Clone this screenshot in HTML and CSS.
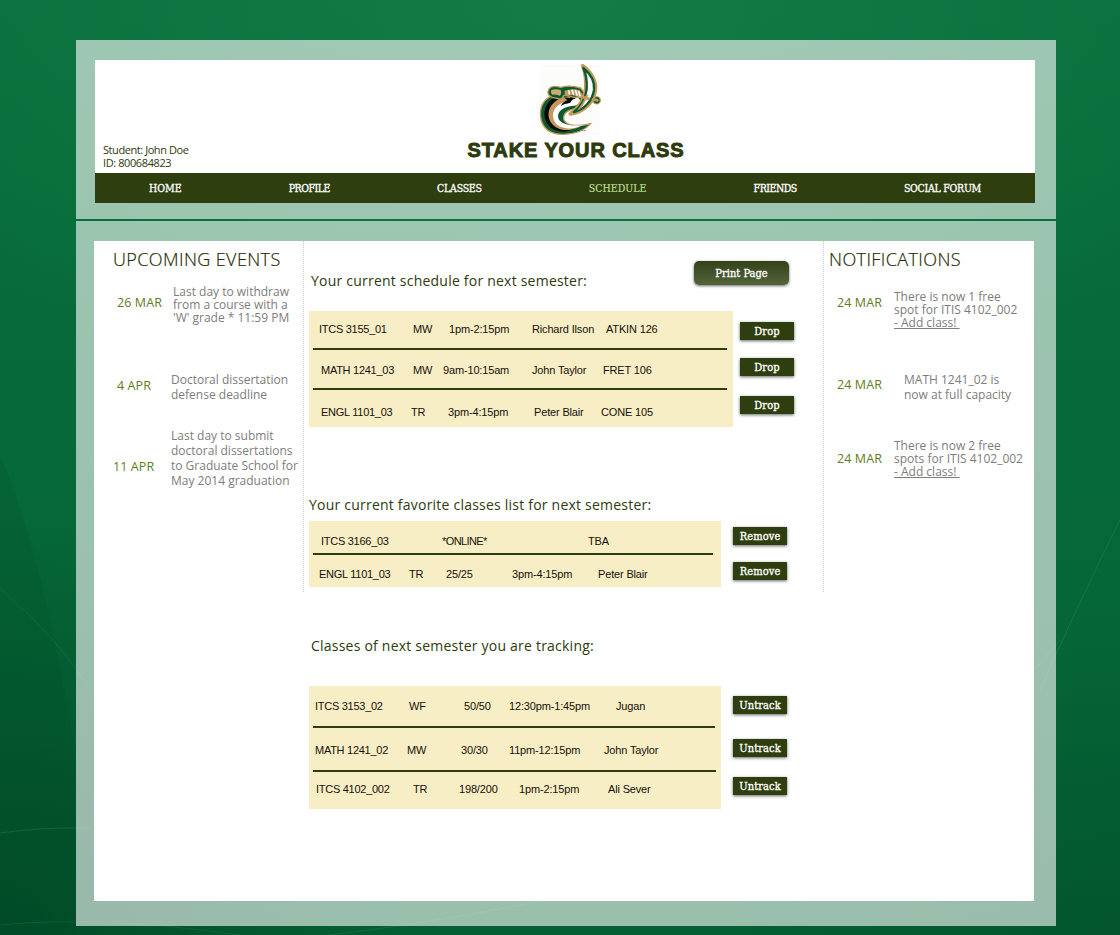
FILE: index.html
```html
<!DOCTYPE html>
<html lang="en">
<head>
<meta charset="utf-8">
<title>Stake Your Class</title>
<link rel="stylesheet" href="styles.css">
</head>
<body>
<svg class="backdrop" viewBox="0 0 1120 935" fill="none" stroke="#2f9a62">
  <path d="M0 833Q40 827 90 828" stroke-opacity=".35"/>
  <path d="M0 588Q60 640 90 690" stroke-opacity=".2"/>
  <path d="M1120 520Q1080 600 1040 690" stroke-opacity=".3"/>
  <path d="M330 935Q620 900 800 820T1060 640" stroke-opacity=".25"/>
  <path d="M0 455Q45 560 76 760L76 935H0Z" fill="#003f22" fill-opacity=".12" stroke="none"/>
  <path d="M0 925Q100 915 240 935" stroke-opacity=".2"/>
</svg>
<div class="shell">
  <header class="panel head">
    <div class="banner">
      <p class="student">Student: John Doe<br>ID: 800684823</p>
      <div class="brand">
        <svg class="logo" viewBox="0 0 240 240">
          <path d="M28 15H212V225H28Z" fill="#fcfdfa"/>
          <g stroke-linejoin="round" stroke-linecap="round">
            <path d="M60 110C36 124 29 148 32 172C37 206 62 223 100 223C138 222 168 208 183 190C150 200 112 200 102 180C97 160 112 149 142 146L158 136L158 96L66 96Z" fill="#0c5a32" stroke="#c49a5c" stroke-width="4"/>
            <path d="M72 113C50 126 40 149 44 172C50 201 70 215 104 215L124 211C84 207 62 186 66 158C70 138 84 124 100 116Z" fill="#0a0a08"/>
            <path d="M98 112C66 124 53 148 56 170C61 196 84 212 118 210L150 202C100 206 76 184 79 160C83 140 100 128 122 126L126 108Z" fill="#c49a5c"/>
            <path d="M132 122C92 122 68 142 69 168C71 197 100 211 138 203L160 196C110 200 84 188 84 168C86 148 108 138 144 136L152 122L140 108Z" fill="#fff"/>
            <path d="M102 112L118 114L128 108L140 112L128 122L118 130Q104 130 92 138Q100 124 112 121Z" fill="#0a0a08"/>
            <path d="M124 122Q136 112 141 120Q142 130 132 134Q112 134 100 142Q108 130 124 130Z" fill="#fff"/>
            <path d="M62 82Q72 76 92 82Q122 74 152 84L162 98L162 112L130 112Q112 104 101 107Q96 120 84 116L66 112Q52 106 54 94Q56 86 62 82Z" fill="#0c5a32" stroke="#c49a5c" stroke-width="4"/>
            <path d="M64 90Q76 86 92 90Q96 98 90 107Q76 103 66 104Q60 97 64 90Z" fill="#d1ab73"/>
            <path d="M104 92Q126 84 148 90L160 106L156 116L146 112L130 106L104 104Z" fill="#c49a5c"/>
            <path d="M117 93L118 102M127 91L130 103M137 92L141 105M146 95L150 107" stroke="#fff" stroke-width="5"/>
            <path d="M158 17C184 36 199 64 196 90C192 126 164 156 121 162C148 142 163 118 167 88C169 62 166 38 158 17Z" fill="#fff" stroke="#c49a5c" stroke-width="11"/>
            <path d="M160 24C182 42 195 66 192 90C187 122 164 148 132 156C152 140 166 116 170 88C172 62 168 42 160 24Z" fill="#fff" stroke="#0c5a32" stroke-width="7"/>
            <path d="M176 104L158 138Q150 149 140 152Q160 128 168 104Z" fill="#c49a5c"/>
            <circle cx="200" cy="121" r="11" fill="#0c5a32" stroke="#c49a5c" stroke-width="3"/>
            <path d="M160 112L176 116M189 118L202 121" stroke="#c49a5c" stroke-width="8"/>
          </g>
          <path d="M156 211H161M163 214V210L165 212L167 210V214M158 211V214" stroke="#555" stroke-width="1.3" fill="none"/>
        </svg>
        <h1 class="title">STAKE YOUR CLASS</h1>
      </div>
    </div>
    <nav class="nav">
      <a class="loose">HOME</a><a class="tight">PROFILE</a><a>CLASSES</a><a class="loose active">SCHEDULE</a><a class="tight">FRIENDS</a><a>SOCIAL FORUM</a>
    </nav>
  </header>
  <main class="panel body">
    <div class="content">
      <aside class="side events">
        <h2>UPCOMING EVENTS</h2>
        <div class="item e1"><b>26 MAR</b><p>Last day to withdraw<br>from a course with a<br>'W' grade * 11:59 PM</p></div>
        <div class="item e2"><b>4 APR</b><p>Doctoral dissertation<br>defense deadline</p></div>
        <div class="item e3"><b>11 APR</b><p>Last day to submit<br>doctoral dissertations<br>to Graduate School for<br>May 2014 graduation</p></div>
      </aside>
      <div class="center">
        <div class="topline"><h3 class="h-sched">Your current schedule for next semester:</h3><button class="print">Print Page</button></div>
        <section class="block sched">
          <div class="table">
            <div class="row s1"><span>ITCS 3155_01</span><span>MW</span><span>1pm-2:15pm</span><span>Richard Ilson</span><span>ATKIN 126</span></div>
            <div class="row s2"><span>MATH 1241_03</span><span>MW</span><span>9am-10:15am</span><span>John Taylor</span><span>FRET 106</span></div>
            <div class="row s3"><span>ENGL 1101_03</span><span>TR</span><span>3pm-4:15pm</span><span>Peter Blair</span><span>CONE 105</span></div>
          </div>
          <div class="actions"><button>Drop</button><button>Drop</button><button>Drop</button></div>
        </section>
        <h3 class="h-fav">Your current favorite classes list for next semester:</h3>
        <section class="block fav">
          <div class="table">
            <div class="row f1"><span>ITCS 3166_03</span><span class="online">*ONLINE*</span><span>TBA</span></div>
            <div class="row f2"><span>ENGL 1101_03</span><span>TR</span><span>25/25</span><span>3pm-4:15pm</span><span>Peter Blair</span></div>
          </div>
          <div class="actions"><button>Remove</button><button>Remove</button></div>
        </section>
        <h3 class="h-track">Classes of next semester you are tracking:</h3>
        <section class="block track">
          <div class="table">
            <div class="row t1"><span>ITCS 3153_02</span><span>WF</span><span>50/50</span><span>12:30pm-1:45pm</span><span>Jugan</span></div>
            <div class="row t2"><span>MATH 1241_02</span><span>MW</span><span>30/30</span><span>11pm-12:15pm</span><span>John Taylor</span></div>
            <div class="row t3"><span>ITCS 4102_002</span><span>TR</span><span>198/200</span><span>1pm-2:15pm</span><span>Ali Sever</span></div>
          </div>
          <div class="actions"><button>Untrack</button><button>Untrack</button><button>Untrack</button></div>
        </section>
      </div>
      <aside class="side notes">
        <h2>NOTIFICATIONS</h2>
        <div class="item n1"><b>24 MAR</b><p>There is now 1 free<br>spot for ITIS 4102_002<br><u>- Add class!&nbsp;</u></p></div>
        <div class="item n2"><b>24 MAR</b><p>MATH 1241_02 is<br>now at full capacity</p></div>
        <div class="item n3"><b>24 MAR</b><p>There is now 2 free<br>spots for ITIS 4102_002<br><u>- Add class!&nbsp;</u></p></div>
      </aside>
    </div>
  </main>
</div>
</body>
</html>
```
FILE: styles.css
```css
* { box-sizing: border-box; }
body {
  margin: 0;
  height: 935px;
  overflow: hidden;
  position: relative;
  font-family: "Open Sans", sans-serif;
  background:
    radial-gradient(ellipse 420px 420px at 0 100%, rgba(0,60,32,.55), transparent),
    radial-gradient(ellipse 420px 300px at 100% 100%, rgba(0,66,36,.35), transparent),
    radial-gradient(ellipse 760px 420px at 50% 0, #127b46, transparent),
    linear-gradient(#08703c, #066a38 40%, #046034);
}
h1, h2, h3, p { margin: 0; font-weight: 400; white-space: nowrap; }
.backdrop { position: absolute; inset: 0; width: 1120px; height: 935px; }
.shell { position: relative; width: 980px; margin-left: 76px; padding-top: 40px; display: flex; flex-direction: column; gap: 2px; }
.panel { background: rgba(255,255,255,.6); }
.head { height: 179px; padding: 20px 21px 0 19px; }
.banner { height: 113px; background: #fff; display: grid; grid-template-columns: 372px 218px; }
.student { padding: 83px 0 0 8px; font-size: 11px; line-height: 13px; letter-spacing: -.4px; color: #2d3b0d; }
.student::first-line { letter-spacing: -.43px; }
.brand { display: flex; flex-direction: column; align-items: center; }
.logo { width: 80px; height: 80px; margin-right: 12px; }
.title { font: bold 20px/20px "Liberation Sans", sans-serif; color: #2d3b0d; -webkit-text-stroke: 1px #2d3b0d; letter-spacing: .9px; }
.nav { height: 30px; background: #2f3e0e; display: flex; justify-content: space-between; align-items: center; padding: 0 54px; font: 10.5px "DejaVu Serif Condensed", "DejaVu Serif", serif; color: #fff; -webkit-text-stroke: .3px; letter-spacing: -.27px; }
.nav .loose { letter-spacing: 0; }
.nav .tight { letter-spacing: -.5px; }
.nav .active { color: #c5e29a; -webkit-text-stroke: .1px; }
.body { height: 705px; padding: 20px 22px 0 18px; }
.content { height: 660px; background: #fff; display: grid; grid-template-columns: 210px 519px 211px; align-items: start; }
.side { height: 351px; }
.events { border-right: 1px dotted #ccc; }
.notes { border-left: 1px dotted #ccc; }
.side h2 { font-size: 18px; line-height: 24px; font-weight: 300; color: #1f2b05; padding: 6px 0 0 19px; letter-spacing: .4px; -webkit-text-stroke: .2px; }
.side.notes h2 { padding-left: 5px; }
.item { display: grid; grid-template-columns: 57px auto; align-items: start; font-size: 12px; line-height: 15px; color: #7d7d7d; }
.item b { font-weight: 400; color: #5e7d1d; font-size: 12.5px; letter-spacing: .1px; }
.item p { letter-spacing: 0; }
.e1 { margin: 14px 0 0 23px; grid-template-columns: 56px auto; line-height: 13px; }
.e1 b { padding-top: 11px; }
.e2 { margin: 48px 0 0 23px; grid-template-columns: 54px auto; }
.e2 b { padding-top: 6px; }
.e3 { margin: 26px 0 0 19px; grid-template-columns: 58px auto; }
.e3 b { padding-top: 31px; }
.n1 { margin: 19px 0 0 13px; line-height: 13px; }
.n1 b { padding-top: 6px; }
.n2 { margin: 43px 0 0 13px; grid-template-columns: 67px auto; }
.n2 b { padding-top: 5px; }
.n3 { margin: 37px 0 0 13px; line-height: 13px; }
.n3 b { padding-top: 13px; }
.center { padding-left: 5px; }
.center h3 { font-size: 14px; line-height: 20px; color: #2d3b0d; letter-spacing: .22px; }
.topline { display: flex; align-items: flex-start; padding: 20px 0 0 2px; height: 70px; }
.topline h3 { width: 383px; padding-top: 10px; }
button { border: 0; padding: 1px 0 0; color: #fff; background: #2f3e0e; font: 11px/17px "DejaVu Serif Condensed", "DejaVu Serif", serif; -webkit-text-stroke: .3px; box-shadow: 0 1px 3px rgba(0,0,0,.6); width: 54px; height: 18px; letter-spacing: .1px; }
.print { width: 95px; height: 24px; border-radius: 5px; line-height: 23px; letter-spacing: 0; background: linear-gradient(#34421a, #53633a); }
.block { display: flex; gap: 12px; }
.sched { height: 116px; gap: 7px; }
.sched .table { width: 424px; padding-right: 6px; }
.fav { height: 66px; }
.track { height: 123px; }
.table { width: 412px; background: #f8eec6; padding: 0 8px 0 4px; }
.row { display: grid; font: 11px/14px "Liberation Sans", sans-serif; color: #161008; white-space: nowrap; border-bottom: 2px solid #2f3e0e; letter-spacing: -.16px; }
.row span:first-child { letter-spacing: -.27px; }
.row .online { letter-spacing: -.6px; }
.row:last-child { border-bottom: 0; }
.s1 { height: 39px; padding: 11px 0 0 6px; grid-template-columns: 94px 36px 83px 74px auto; }
.s2 { height: 40px; padding: 13px 0 0 8px; grid-template-columns: 92px 30px 89px 71px auto; }
.s3 { padding: 15px 0 0 8px; grid-template-columns: 90px 37px 86px 67px auto; }
.f1 { height: 34px; padding: 13px 0 0 8px; grid-template-columns: 121px 146px auto; }
.f2 { padding: 12px 0 0 6px; grid-template-columns: 90px 37px 66px 86px auto; }
.t1 { height: 42px; width: 402px; padding: 13px 0 0 2px; grid-template-columns: 94px 55px 45px 107px auto; }
.t2 { height: 44px; width: 403px; padding: 15px 0 0 2px; grid-template-columns: 92px 54px 48px 95px auto; }
.t3 { padding: 10px 0 0 3px; grid-template-columns: 97px 46px 60px 89px auto; }
.actions { display: flex; flex-direction: column; }
.sched .actions { padding-top: 11px; gap: 18px; }
.sched button:last-child { margin-top: 2px; }
.fav .actions { padding-top: 6px; gap: 17px; }
.track .actions { padding-top: 10px; gap: 20px; }
.track button:nth-child(2) { margin-top: 5px; }
.center .h-fav { margin-top: 68px; margin-bottom: 6px; }
.center .h-track { margin: 49px 0 30px 2px; }
```
